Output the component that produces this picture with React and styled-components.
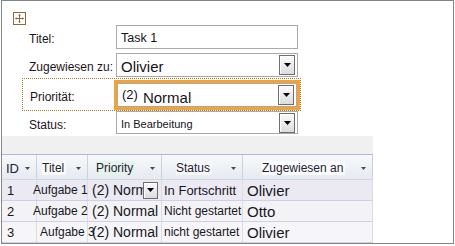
import React from 'react';
import styled, { createGlobalStyle } from 'styled-components';

const GlobalStyle = createGlobalStyle`
  html, body {
    margin: 0;
    padding: 0;
    background: #fff;
  }
  body {
    font-family: 'Liberation Sans', Arial, sans-serif;
    color: #1b1b1b;
  }
  * {
    box-sizing: border-box;
  }
`;

const Frame = styled.div`
  margin-left: 1px;
  width: 453px;
  height: 244px;
  border: 1px solid #858585;
  display: flex;
  flex-direction: column;
  overflow: hidden;
  background: #fff;
`;

const FormPanel = styled.div`
  flex: none;
  height: 135px;
  padding-top: 11px;
  display: flex;
  flex-direction: column;
`;

const MoveHandle = styled.svg`
  display: block;
  margin-left: 11px;
  width: 13px;
  height: 13px;
`;

const Fields = styled.div`
  margin-left: 20px;
  display: flex;
  flex-direction: column;
`;

const FieldRow = styled.div`
  display: grid;
  grid-template-columns: 87px 182px;
  padding-left: 7px;
  margin-top: ${p => p.$gap || 0}px;
`;

const PriorityRow = styled.div`
  display: grid;
  grid-template-columns: 84px 186px;
  width: 279px;
  height: 33px;
  margin-top: 1px;
  padding: 1px 0 0 7px;
  border: 1px dotted #a97c3e;
`;

const Label = styled.label`
  display: flex;
  align-items: center;
  padding-top: 4px;
  font-size: 12px;
  white-space: nowrap;
  color: #1a1420;
`;

const Box = styled.div`
  height: ${p => p.$h}px;
  border: 1px solid #a9a9a9;
  background: #fff;
  display: flex;
  align-items: center;
  padding: 0 2px 0 4px;
`;

const Highlight = styled.div`
  height: 30px;
  border: 3px solid #f6a233;
  display: flex;
  flex-direction: column;
`;

const Value = styled.span`
  flex: 1;
  font-size: ${p => p.$size}px;
  padding-top: ${p => p.$lift || 0}px;
  white-space: nowrap;
  overflow: hidden;
  color: #16121c;
`;

const Paren = styled.sup`
  font-size: 13px;
  vertical-align: 4px;
  margin-right: 5px;
`;

const DropButton = styled.div`
  flex: none;
  width: ${p => p.$w || 16}px;
  height: ${p => p.$h || 20}px;
  margin-right: ${p => p.$mr || 0}px;
  border: 1px solid #6e6e6e;
  background: linear-gradient(#fbfbfb, #dcdcdc);
  box-shadow: inset 1px 1px 0 #fff;
  display: flex;
  align-items: center;
  justify-content: center;
`;

const Lower = styled.div`
  flex: 1;
  display: flex;
`;

const Sheet = styled.div`
  width: 371px;
  display: flex;
  flex-direction: column;
`;

const Band = styled.div`
  height: 19px;
  background: #f0f0f0;
  border-bottom: 1px solid #a3bce0;
`;

const cols = '35px 51px 74px 81px 130px';

const HeaderRow = styled.div`
  display: grid;
  grid-template-columns: ${cols};
  height: 25px;
  background: linear-gradient(#f7f9fb, #e5eaf1);
  border-bottom: 1px solid #d2d8e2;
`;

const HeaderCell = styled.div`
  display: flex;
  align-items: center;
  justify-content: space-between;
  padding: 2px 6px 0 ${p => p.$pad}px;
  border-right: 1px solid #c9d1dc;
  font-size: ${p => p.$size || 12}px;
  color: #1e2230;
  white-space: nowrap;
`;

const HeaderText = styled.span`
  background: ${p => p.$tint || 'transparent'};
  padding-right: 2px;
`;

const DataRow = styled.div`
  display: grid;
  grid-template-columns: ${cols};
  height: 21px;
  background: ${p => p.$bg};
  border-bottom: 1px solid #cdd0e8;
`;

const Cell = styled.div`
  display: flex;
  align-items: center;
  padding-left: ${p => p.$pad || 0}px;
  border-right: 1px solid #dcdce4;
  font-size: ${p => p.$size || 12}px;
  white-space: nowrap;
  color: #18161e;
  overflow: ${p => (p.$clip ? 'hidden' : 'visible')};
`;

const Shifted = styled.span`
  margin-left: ${p => p.$x}px;
`;

const Clipped = styled.span`
  flex: 1;
  overflow: hidden;
`;

const Filler = styled.div`
  flex: 1;
  background: #fff;
`;

function Arrow({ w = 7, h = 4, color = '#000' }) {
  return (
    <svg width={w} height={h} viewBox={`0 0 ${w} ${h}`}>
      <polygon points={`0,0 ${w},0 ${w / 2},${h}`} fill={color} />
    </svg>
  );
}

function Combo({ h, size, children, lift }) {
  return (
    <Box $h={h}>
      <Value $size={size} $lift={lift}>{children}</Value>
      <DropButton>
        <Arrow />
      </DropButton>
    </Box>
  );
}

const headers = [
  { text: 'ID', pad: 4, size: 13 },
  { text: 'Titel', pad: 5, tint: '#fbfbfc' },
  { text: 'Priority', pad: 8, tint: '#e6f3ec' },
  { text: 'Status', pad: 14, tint: '#f6f7f8' },
  { text: 'Zugewiesen an', pad: 19, tint: '#fafbfc' },
];

const rows = [
  { id: '1', title: 'Aufgabe 1', tx: -4, status: 'In Fortschritt', ss: 13, who: 'Olivier', bg: '#ebeaf3', open: true },
  { id: '2', title: 'Aufgabe 2', tx: -4, status: 'Nicht gestartet', ss: 12, who: 'Otto', bg: '#f3f3f5' },
  { id: '3', title: 'Aufgabe 3', tx: 3, status: 'nicht gestartet', ss: 12, who: 'Olivier', bg: '#f6f6f8' },
];

export default function App() {
  return (
    <>
      <GlobalStyle />
      <Frame>
        <FormPanel>
          <MoveHandle viewBox="0 0 13 13">
            <rect x="0.5" y="0.5" width="12" height="12" fill="#fff" stroke="#8b6a3e" />
            <path d="M6.5 2.5v8M2.5 6.5h8" stroke="#8b6a3e" strokeWidth="1" />
            <path d="M6.5 2l-1.5 1.5h3zM6.5 11l-1.5-1.5h3zM2 6.5l1.5-1.5v3zM11 6.5l-1.5-1.5v3z" fill="#8b6a3e" />
          </MoveHandle>
          <Fields>
            <FieldRow>
              <Label>Titel:</Label>
              <Box $h={24}>
                <Value $size={12.5} $lift={1}>Task 1</Value>
              </Box>
            </FieldRow>
            <FieldRow $gap={4}>
              <Label>Zugewiesen zu:</Label>
              <Combo h={24} size={15} lift={2}>Olivier</Combo>
            </FieldRow>
            <PriorityRow>
              <Label>Priorität:</Label>
              <Highlight>
                <Combo h={24} size={15} lift={2}>
                  <Paren>(2)</Paren>Normal
                </Combo>
              </Highlight>
            </PriorityRow>
            <FieldRow>
              <Label>Status:</Label>
              <Combo h={23} size={11} lift={2}>In Bearbeitung</Combo>
            </FieldRow>
          </Fields>
        </FormPanel>
        <Lower>
          <Sheet>
            <Band />
            <HeaderRow>
              {headers.map(h => (
                <HeaderCell key={h.text} $pad={h.pad} $size={h.size}>
                  <HeaderText $tint={h.tint}>{h.text}</HeaderText>
                  <Arrow w={5} h={3} color="#4a4a4a" />
                </HeaderCell>
              ))}
            </HeaderRow>
            {rows.map(r => (
              <DataRow key={r.id} $bg={r.bg}>
                <Cell $pad={5} $size={13}>{r.id}</Cell>
                <Cell>
                  <Shifted $x={r.tx}>{r.title}</Shifted>
                </Cell>
                {r.open ? (
                  <Cell $pad={4} $size={14} $clip>
                    <Clipped>(2) Normal</Clipped>
                    <DropButton $w={15} $h={17} $mr={3}>
                      <Arrow />
                    </DropButton>
                  </Cell>
                ) : (
                  <Cell $pad={4} $size={14}>(2) Normal</Cell>
                )}
                <Cell $pad={2} $size={r.ss}>{r.status}</Cell>
                <Cell $pad={4} $size={15}>{r.who}</Cell>
              </DataRow>
            ))}
          </Sheet>
          <Filler />
        </Lower>
      </Frame>
    </>
  );
}
